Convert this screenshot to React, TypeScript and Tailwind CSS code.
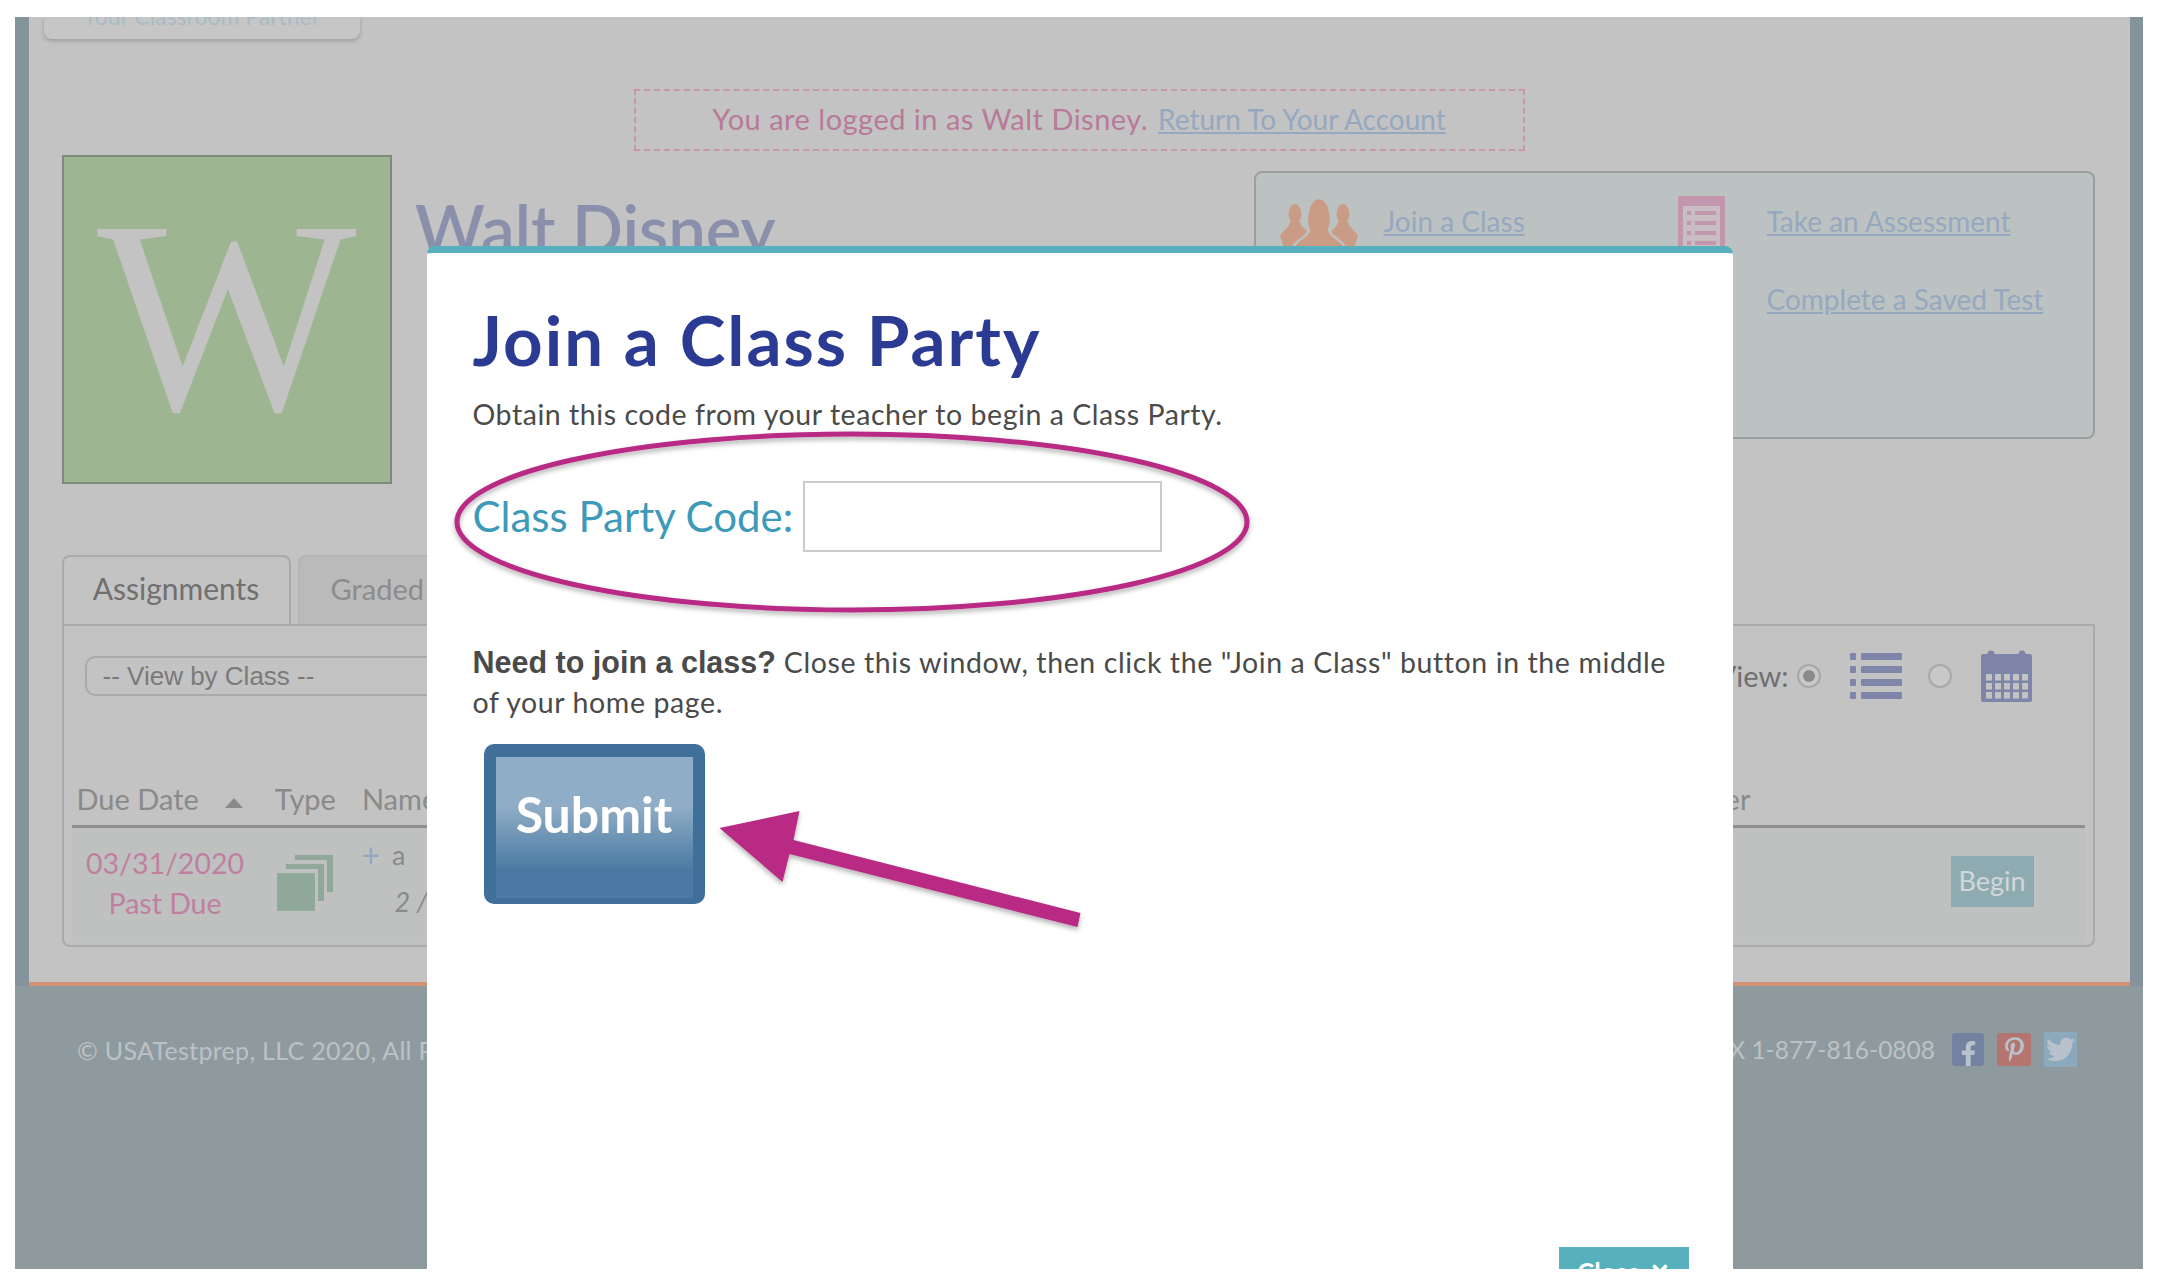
import React from "react";
import { FaFacebookF, FaPinterestP, FaTwitter } from "react-icons/fa";
import { X } from "lucide-react";

function PeopleIcon() {
  return (
    <svg width="78" height="50" viewBox="0 0 78 50" className="block" fill="#cb9c85">
      <ellipse cx="15" cy="16" rx="6.5" ry="10" />
      <path d="M0 38 C3 32 9 30 10 24 L20 24 C21 29 25 31 27 33 L20 50 L4 50Z" />
      <ellipse cx="63" cy="16" rx="6.5" ry="10" />
      <path d="M78 38 C75 32 69 30 68 24 L58 24 C57 29 53 31 51 33 L58 50 L74 50Z" />
      <path d="M13 50 C16 41 27 40 29 32 C25 24 27 0 39 0 C51 0 53 24 49 32 C51 40 62 41 65 50Z" stroke="#bcc2c2" strokeWidth="2.5" />
    </svg>
  );
}

function SheetIcon() {
  return (
    <svg width="47" height="56" viewBox="0 0 47 56" className="block">
      <rect width="47" height="56" rx="2" fill="#c296ad" />
      <rect x="5" y="10" width="37" height="46" fill="#c9bcc3" />
      {[15, 25, 35, 45].map((y) => (
        <g key={y} fill="#c296ad">
          <rect x="9" y={y} width="4" height="4" />
          <rect x="17" y={y} width="21" height="4" />
        </g>
      ))}
    </svg>
  );
}

function StackIcon() {
  return (
    <svg width="56" height="56" viewBox="0 0 56 56" className="block">
      <path d="M18 0H56V37H50V5H18Z" fill="#8fa89a" />
      <path d="M9 9H47V46H41V14H9Z" fill="#8fa89a" />
      <rect x="0" y="18" width="38" height="38" fill="#8fa89a" />
    </svg>
  );
}

function ListIcon() {
  return (
    <svg width="52" height="46" viewBox="0 0 52 46" className="block" fill="#7e85a8">
      {[0, 13, 26, 39].map((y) => (
        <g key={y}>
          <rect x="0" y={y} width="6" height="7" rx="1" />
          <rect x="11" y={y} width="41" height="7" rx="1" />
        </g>
      ))}
    </svg>
  );
}

function CalendarIcon() {
  const cols = [5, 14, 23, 32, 41];
  const rows = [24, 33, 42];
  return (
    <svg width="51" height="52" viewBox="0 0 51 52" className="block">
      <rect x="0" y="4" width="51" height="48" rx="2" fill="#7e85a8" />
      <circle cx="10" cy="4" r="3.5" fill="#7e85a8" />
      <circle cx="41" cy="4" r="3.5" fill="#7e85a8" />
      {rows.map((y) =>
        cols.map((x) => <rect key={`${x}-${y}`} x={x} y={y} width="6" height="6.5" fill="#c3c3c3" />)
      )}
    </svg>
  );
}

function Radio({ on }: { on?: boolean }) {
  return (
    <span className="flex items-center justify-center w-6 h-6 rounded-full border-2 border-[#a8a8a8] bg-[#c8c8c8]">
      {on && <span className="w-3 h-3 rounded-full bg-[#8b8b8b]" />}
    </span>
  );
}

function Annotations() {
  return (
    <svg width="900" height="720" viewBox="0 0 900 720" className="absolute left-0 top-0 pointer-events-none" fill="none">
      <defs>
        <filter id="soft" x="-5%" y="-5%" width="110%" height="115%">
          <feDropShadow dx="0" dy="3" stdDeviation="2.5" floodColor="#000" floodOpacity="0.3" />
        </filter>
      </defs>
      {/* coordinates are relative to the modal box */}
      <ellipse cx="425" cy="269" rx="395" ry="88" stroke="#b92a84" strokeWidth="5" filter="url(#soft)" />
      <path
        d="M292.500 575 L372.500 558 L366.500 587 L653.500 660 L650.500 674 L362.500 601 L355.500 629Z"
        fill="#b92a84"
        filter="url(#soft)"
      />
    </svg>
  );
}

export default function App() {
  return (
    <div className="relative w-[2170px] h-[1276px] bg-white overflow-hidden pt-[17px] font-[Lato,sans-serif]">
      <div className="relative ml-[15px] w-[2128px] h-[1252px] flex flex-col overflow-hidden">
        {/* page behind the overlay */}
        <div className="h-[969px] shrink-0 bg-[#84949a] px-[13.5px]">
          <div className="h-full bg-[#c3c3c3] border-b-[4px] border-[#cf9373] flex flex-col">
            <div className="ml-[15px] w-[316px] h-[22px] flex items-end justify-center overflow-hidden rounded-b-lg bg-[#c6c6c6] shadow-[0_2px_4px_rgba(0,0,0,0.2)] pb-[9px]">
              <span className="text-[23px] leading-[28px] text-[#a9bcc4] whitespace-nowrap">Your Classroom Partner</span>
            </div>

            <div className="ml-[605px] mt-[50px] w-[891px] h-[62px] border-2 border-dashed border-[#c797ae] flex items-center justify-center pb-[2px] text-[29px] text-[#b97a9a]">
              <span className="tracking-[0.5px]">You are logged in as Walt Disney.</span>
              <a className="ml-[10px] text-[28px] text-[#96a8bf] underline">Return To Your Account</a>
            </div>

            <div className="flex items-start mt-[4px] pl-[33.500px] pr-[35px]">
              <div className="w-[330px] h-[329px] border-2 border-[#7f8a7c] bg-[#9eb592] flex items-center justify-center font-['Liberation_Serif',serif] text-[#c3c3c3] text-[275px] leading-none pb-[6px]">
                W
              </div>
              <h1 className="ml-[23px] mt-[31px] text-[67px] leading-[84px] font-semibold text-[#8a8fab]">Walt Disney</h1>
              <div className="ml-auto mt-[16px] w-[841px] h-[268px] rounded-lg border-2 border-[#9a9f9f] bg-[#bcc2c2] grid grid-cols-[398px_1fr] pt-[23px] text-[28px] text-[#96a8bf]">
                <div className="flex items-start pl-[24px] pt-[2px]">
                  <PeopleIcon />
                  <a className="ml-[26px] mt-[2px] underline">Join a Class</a>
                </div>
                <div className="flex items-start pl-[24px]">
                  <SheetIcon />
                  <div className="ml-[42px] mt-[4px] flex flex-col gap-[36px]">
                    <a className="underline">Take an Assessment</a>
                    <a className="underline">Complete a Saved Test</a>
                  </div>
                </div>
              </div>
            </div>

            <div className="mt-[71px] ml-[33px] flex items-end h-[69px]">
              <div className="w-[229px] h-full rounded-t-lg border-2 border-b-0 border-[#aaaaaa] flex items-center justify-center pb-[4px] text-[30px] text-[#707070]">
                Assignments
              </div>
              <div className="ml-[7px] w-[300px] h-full rounded-t-lg border-2 border-b-0 border-[#b4b4b4] bg-[#bababa] flex items-center pl-[31px] pb-[4px] text-[29px] text-[#8c8c8c]">
                Graded
              </div>
            </div>
            <div className="ml-[33px] w-[2033px] h-[323px] rounded-b-lg border-2 border-[#aaaaaa] px-[8px] flex flex-col">
              <div className="flex items-center mt-[24px] h-[52px]">
                <div className="ml-[13px] w-[500px] h-[40px] rounded-[10px] border-2 border-[#aaaaaa] flex items-center pl-[16px] font-['Liberation_Sans',sans-serif] text-[26px] text-[#7a7a7a]">
                  -- View by Class --
                </div>
                <div className="ml-auto flex items-center mr-[53px]">
                  <span className="text-[29px] text-[#6f6f6f]">View:</span>
                  <span className="ml-[8px]"><Radio on /></span>
                  <span className="ml-[29px]"><ListIcon /></span>
                  <span className="ml-[26px]"><Radio /></span>
                  <span className="ml-[29px]"><CalendarIcon /></span>
                </div>
              </div>

              <div className="mt-[80px] h-[46px] shrink-0 border-b-[3px] border-[#8f8f8f] flex items-end pb-[6px] text-[29px] leading-[40px] text-[#8a8a8a]">
                <span className="ml-[5px]">Due Date</span>
                <span className="ml-[26px] mb-[11px] w-0 h-0 border-x-[9px] border-x-transparent border-b-[10px] border-b-[#8a8a8a]" />
                <span className="ml-[32px]">Type</span>
                <span className="ml-[26px]">Name</span>
                <span className="ml-auto mr-[334px]">Teacher</span>
              </div>

              <div className="h-[115px] shrink-0 bg-[#bfc1c0] flex items-start">
                <div className="w-[187px] pt-[15px] text-center text-[28.500px] leading-[40px] text-[#bf80a0]">
                  <div>03/31/2020</div>
                  <div>Past Due</div>
                </div>
                <div className="ml-[18px] mt-[27px]"><StackIcon /></div>
                <div className="ml-[29px] pt-[7px] text-[#8a8a8a]">
                  <div className="flex items-center text-[27px] leading-[40px]">
                    <span className="text-[#93a8c0] text-[32px]">+</span>
                    <span className="ml-[12px]">a</span>
                  </div>
                  <div className="ml-[33px] mt-[7px] text-[27px] leading-[40px] italic">2 / 5</div>
                </div>
                <div className="ml-auto mr-[51px] mt-[28px] w-[83px] h-[51px] bg-[#8fabb2] flex items-center justify-center text-[27px] text-[#d0d8da]">
                  Begin
                </div>
              </div>
            </div>
          </div>
        </div>

        <div className="flex-1 bg-[#8f9a9f] flex items-start pl-[62px] pr-[66px] pt-[46px] text-[25px] leading-[36px] text-[#bcc2c4]">
          <span className="tracking-[0.3px]">© USATestprep, LLC 2020, All Rights Reserved</span>
          <span className="ml-auto text-[24.500px]">FAX 1-877-816-0808</span>
          <div className="ml-[17px] flex items-center gap-[13px] text-[#b8c2cc]">
            <span className="w-[32px] h-[33px] rounded-[3px] bg-[#7481a0] flex items-end justify-center"><FaFacebookF size={25} /></span>
            <span className="w-[34px] h-[33px] rounded-[3px] bg-[#b5756f] flex items-center justify-center"><FaPinterestP size={25} /></span>
            <span className="w-[33px] h-[35px] bg-[#8aa9bd] flex items-center justify-center"><FaTwitter size={29} /></span>
          </div>
        </div>

        {/* modal */}
        <div className="absolute left-[411.500px] top-[228.500px] bottom-0 w-[1306.500px] rounded-t-lg border-t-[7px] border-[#56b1bc] bg-white overflow-hidden flex flex-col pl-[46px] pr-[44px]">
          <h2 className="mt-[47px] text-[69px] tracking-[2px] leading-[80px] font-bold text-[#2b3a92]">Join a Class Party</h2>
          <p className="mt-[14px] text-[28.500px] tracking-[0.55px] leading-[40px] text-[#4a4a4a]">Obtain this code from your teacher to begin a Class Party.</p>
          <div className="mt-[47px] flex items-center">
            <label className="text-[42px] leading-[50px] text-[#3d9ab8]">Class Party Code:</label>
            <div className="ml-[10px] w-[359px] h-[71px] border-2 border-[#cccccc]" />
          </div>
          <p className="mt-[90px] w-[1205px] text-[28.500px] tracking-[0.6px] leading-[40px] text-[#4a4a4a]">
            <b className="font-['Liberation_Sans',sans-serif] font-bold text-[30.500px] leading-none tracking-normal">Need to join a class?</b> Close this window, then click the "Join a Class" button in the middle of your home page.
          </p>
          <div className="mt-[22px] ml-[11px] w-[221px] h-[160px] rounded-[10px] bg-[#40709a] pt-[13px] px-[12px] pb-[6px]">
            <div className="h-full bg-gradient-to-b from-[#8fadc6] from-35% to-[#4a7aa3] to-80% flex items-center justify-center pb-[25px] text-white font-bold text-[50px]">
              Submit
            </div>
          </div>
          <div className="mt-auto -mb-[28px] self-end w-[130px] h-[50px] bg-[#56b1bc] flex items-center justify-center gap-[8px] text-white font-bold text-[26px] shrink-0">
            Close <X size={22} strokeWidth={4} />
          </div>
          <Annotations />
        </div>
      </div>
    </div>
  );
}
